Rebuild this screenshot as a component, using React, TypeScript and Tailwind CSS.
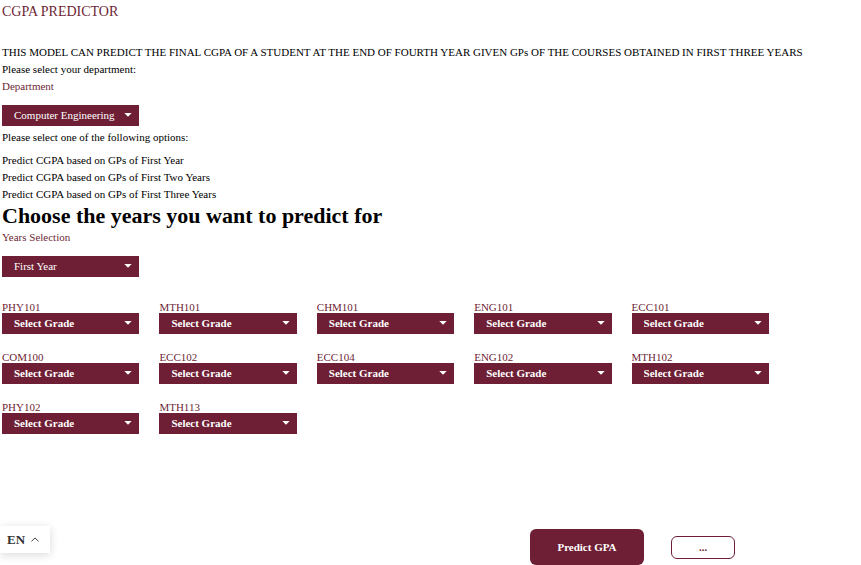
import { useId } from "react";

const courses = [
  "PHY101", "MTH101", "CHM101", "ENG101", "ECC101",
  "COM100", "ECC102", "ECC104", "ENG102", "MTH102",
  "PHY102", "MTH113",
];

const grades = ["Select Grade", "A+", "A", "A-", "B+", "B", "B-", "C+", "C", "C-", "D", "F"];

type PickerProps = {
  label: string;
  options: string[];
  course?: boolean;
};

function Picker({ label, options, course = false }: PickerProps) {
  const id = useId();
  return (
    <div className="flex flex-col">
      <label
        htmlFor={id}
        className={course ? "text-[11px] leading-3 text-[#6e1f35]" : "mb-[10px] text-[11px] leading-[17px] text-[#6e1f35]"}
      >
        {label}
      </label>
      <div className={course ? "grid" : "grid w-[137px]"}>
        <select
          id={id}
          className={
            course
              ? "col-start-1 row-start-1 h-[21px] w-full appearance-none bg-[#6e1f35] pb-px pl-3 pr-6 text-[11px] font-bold text-white"
              : "col-start-1 row-start-1 h-[21px] w-full appearance-none bg-[#6e1f35] pb-px pl-3 pr-5 text-[11px] text-white"
          }
        >
          {options.map((o) => (
            <option key={o}>{o}</option>
          ))}
        </select>
        <svg
          viewBox="0 0 8 4"
          className="pointer-events-none col-start-1 row-start-1 mr-[7px] mt-2 h-1 w-2 justify-self-end"
          aria-hidden="true"
        >
          <path d="M0.3 0h7.4L4 3.8z" fill="#fff" />
        </svg>
      </div>
    </div>
  );
}

export default function App() {
  return (
    <div className="flex min-h-screen flex-col bg-white font-['Liberation_Serif','Times_New_Roman',serif] text-[11px] leading-[17px] text-black">
      <main className="pl-[2px] pt-[3px]">
        <h1 className="text-[14px] leading-[17px] text-[#6e1f35]">CGPA PREDICTOR</h1>
        <p className="mt-6">
          THIS MODEL CAN PREDICT THE FINAL CGPA OF A STUDENT AT THE END OF FOURTH YEAR GIVEN GPs OF THE COURSES OBTAINED IN FIRST THREE YEARS
        </p>
        <p>Please select your department:</p>
        <Picker label="Department" options={["Computer Engineering", "Electrical Engineering", "Mechanical Engineering"]} />
        <p className="mt-[3px]">Please select one of the following options:</p>
        <ul className="mt-[6px]">
          <li>Predict CGPA based on GPs of First Year</li>
          <li>Predict CGPA based on GPs of First Two Years</li>
          <li>Predict CGPA based on GPs of First Three Years</li>
        </ul>
        <h2 className="text-[22px] font-bold leading-[26px]">Choose the years you want to predict for</h2>
        <Picker label="Years Selection" options={["First Year", "First Two Years", "First Three Years"]} />
        <div className="mr-[92px] mt-6 grid grid-cols-5 gap-x-5 gap-y-[17px]">
          {courses.map((c) => (
            <Picker key={c} label={c} options={grades} course />
          ))}
        </div>
      </main>
      <footer className="mt-auto flex items-end justify-between">
        <button
          type="button"
          className="mb-3 flex h-[27px] w-[50px] items-center gap-[6px] bg-white pl-[7px] text-[13px] font-bold text-[#333] shadow-[0_2px_10px_rgba(0,0,0,0.15)]"
        >
          EN
          <svg viewBox="0 0 8 5" className="h-[5px] w-2" fill="none" stroke="#444" aria-hidden="true">
            <path d="M0.5 4.3L4 1l3.5 3.3" />
          </svg>
        </button>
        <div className="mr-[126px] flex items-center gap-[27px]">
          <button type="button" className="h-9 w-[114px] rounded-md bg-[#6e1f35] text-[11px] font-bold text-white">
            Predict GPA
          </button>
          <output className="flex h-[23px] w-16 items-center justify-center rounded-md border border-[#6e1f35] text-[11px] font-bold text-[#6e1f35]">
            ...
          </output>
        </div>
      </footer>
    </div>
  );
}
